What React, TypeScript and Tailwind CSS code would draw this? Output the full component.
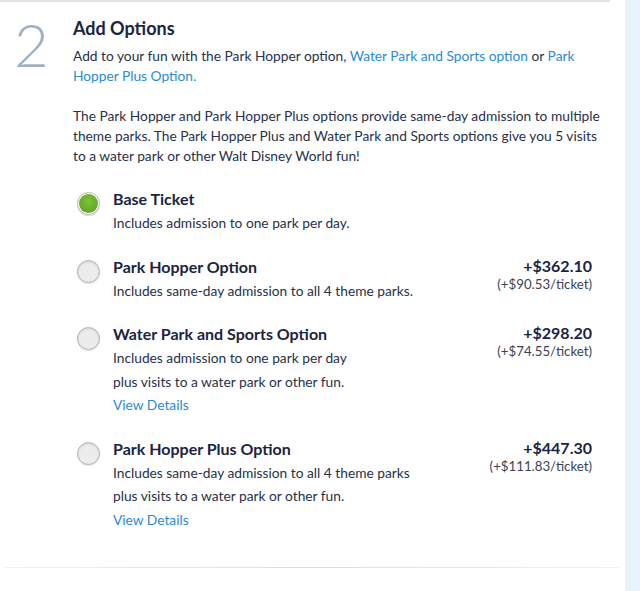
const options = [
  {
    id: "base",
    title: "Base Ticket",
    lines: ["Includes admission to one park per day."],
    selected: true,
  },
  {
    id: "hopper",
    title: "Park Hopper Option",
    lines: ["Includes same-day admission to all 4 theme parks."],
    price: "+$362.10",
    perTicket: "(+$90.53/ticket)",
  },
  {
    id: "water",
    title: "Water Park and Sports Option",
    lines: ["Includes admission to one park per day", "plus visits to a water park or other fun."],
    price: "+$298.20",
    perTicket: "(+$74.55/ticket)",
    details: true,
  },
  {
    id: "plus",
    title: "Park Hopper Plus Option",
    lines: ["Includes same-day admission to all 4 theme parks", "plus visits to a water park or other fun."],
    price: "+$447.30",
    perTicket: "(+$111.83/ticket)",
    details: true,
  },
];

function Radio({ selected }: { selected?: boolean }) {
  if (selected) {
    return (
      <span className="mt-[5px] flex h-[23px] w-[23px] shrink-0 items-center justify-center rounded-full border border-[#b9b9b9] bg-white shadow-[0_1px_1px_rgba(0,0,0,0.15)]">
        <span className="h-[19px] w-[19px] rounded-full bg-[radial-gradient(circle_at_50%_40%,#7cc23a,#5a9e1c)]" />
      </span>
    );
  }
  return (
    <span className="mt-[5px] block h-[23px] w-[23px] shrink-0 rounded-full border border-[#b5b5b5] bg-[#ececec] shadow-[inset_0_1px_2px_rgba(0,0,0,0.12),0_1px_1px_rgba(0,0,0,0.1)]" />
  );
}

export default function App() {
  return (
    <div className="flex min-h-[591px] bg-white font-['Lato',sans-serif] text-[#273149]">
      <div className="w-[625px] shrink-0">
        <div className="mr-[15px] h-[2px] bg-[#e4e4e4]" />
        <div className="flex pt-[12px]">
          <div className="w-[73px] shrink-0 pl-[14px] text-[60px] font-light leading-[60px] text-[#9eb0c6]">
            2
          </div>
          <div className="flex-1 pr-[20px]">
            <h2 className="text-[18px] font-bold leading-[28px] text-[#1b2440]">Add Options</h2>
            <p className="mt-[4px] text-[13.75px] leading-[20px]">
              Add to your fun with the Park Hopper option,{" "}
              <a className="text-[#2b8ad3]">Water Park and Sports option</a> or{" "}
              <a className="text-[#2b8ad3]">Park Hopper Plus Option.</a>
            </p>
            <p className="mt-[20px] text-[13.75px] leading-[20px]">
              The Park Hopper and Park Hopper Plus options provide same-day admission to multiple
              theme parks. The Park Hopper Plus and Water Park and Sports options give you 5 visits
              to a water park or other Walt Disney World fun!
            </p>
          </div>
        </div>

        <div className="mt-[21px] flex flex-col gap-[20px] pl-[77px] pr-[33px]">
          {options.map((o) => (
            <div key={o.id} className="flex items-start">
              <Radio selected={o.selected} />
              <div className="ml-[13px] flex-1">
                <div className="text-[16px] font-bold leading-[24px] text-[#1b2440]">{o.title}</div>
                <div className="text-[13.75px] leading-[23.5px]">
                  {o.lines.map((l) => (
                    <div key={l}>{l}</div>
                  ))}
                  {o.details && <a className="block text-[#2b8ad3]">View Details</a>}
                </div>
              </div>
              {o.price && (
                <div className="pt-[1px] text-right">
                  <div className="text-[16px] font-bold leading-[20px] text-[#1b2440]">{o.price}</div>
                  <div className="text-[13.25px] leading-[16px] text-[#3b4254]">{o.perTicket}</div>
                </div>
              )}
            </div>
          ))}
        </div>

        <div className="mt-[36px] mx-[4px] h-px bg-gradient-to-r from-[#f2f2f2] via-[#dedede] to-[#f2f2f2]" />
      </div>
      <div className="flex-1 bg-[#e8f4fc]" />
    </div>
  );
}
